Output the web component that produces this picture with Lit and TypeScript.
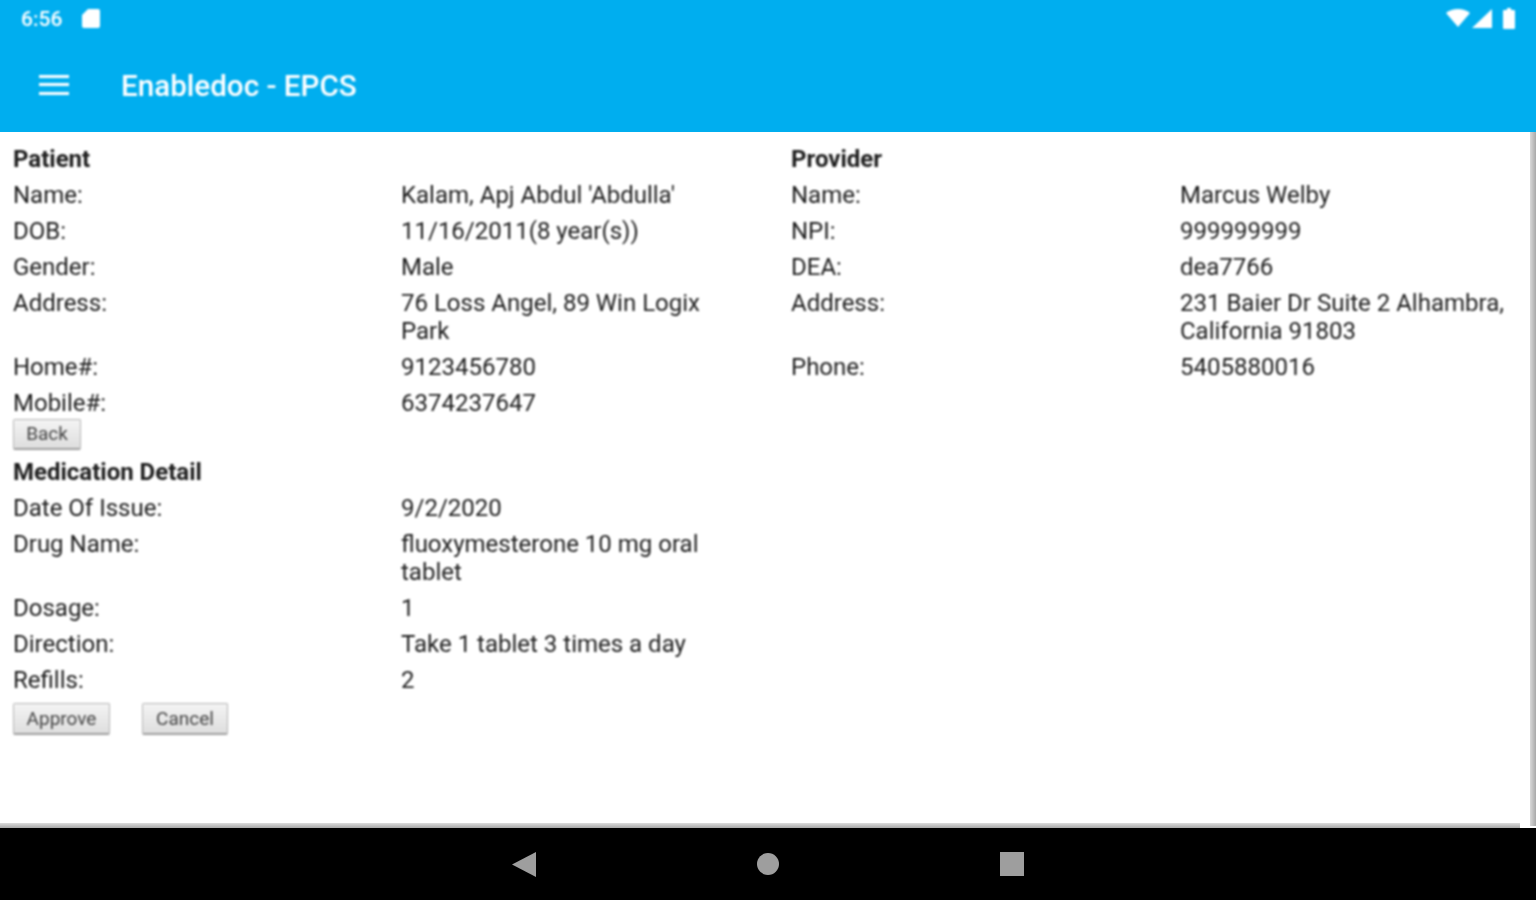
import { LitElement, html, css, svg } from "lit";
import { customElement } from "lit/decorators.js";

type Row = [string, string];

const patient: Row[] = [
  ["Name:", "Kalam, Apj Abdul 'Abdulla'"],
  ["DOB:", "11/16/2011(8 year(s))"],
  ["Gender:", "Male"],
  ["Address:", "76 Loss Angel, 89 Win Logix Park"],
  ["Home#:", "9123456780"],
  ["Mobile#:", "6374237647"],
];
const provider: Row[] = [
  ["Name:", "Marcus Welby"],
  ["NPI:", "999999999"],
  ["DEA:", "dea7766"],
  ["Address:", "231 Baier Dr Suite 2 Alhambra, California 91803"],
  ["Phone:", "5405880016"],
];
const medication: Row[] = [
  ["Date Of Issue:", "9/2/2020"],
  ["Drug Name:", "fluoxymesterone 10 mg oral tablet"],
  ["Dosage:", "1"],
  ["Direction:", "Take 1 tablet 3 times a day"],
  ["Refills:", "2"],
];

@customElement("app-root")
export class AppRoot extends LitElement {
  static styles = css`
    :host {
      display: block;
      width: 1536px;
      height: 900px;
      font-family: Roboto, "Liberation Sans", sans-serif;
      overflow: hidden;
    }
    .screen {
      position: relative;
      display: flex;
      flex-direction: column;
      height: 900px;
      background: #fff;
    }
    .top {
      height: 132px;
      flex: none;
      background: #00aeef;
      color: #fff;
      display: flex;
      flex-direction: column;
    }
    .status {
      height: 36px;
      display: flex;
      align-items: center;
      padding: 0 21px;
      filter: blur(0.9px);
    }
    .time {
      font-size: 21px;
      font-weight: 500;
      width: 61px;
      position: relative;
      top: 1px;
    }
    .sd { display: block; }
    .sys {
      margin-left: auto;
      display: flex;
      align-items: center;
    }
    .sys svg { display: block; }
    .wifi { margin-right: 2px; }
    .signal { margin-right: 11px; }
    .bar {
      flex: 1;
      display: flex;
      align-items: center;
      padding-left: 39px;
      padding-top: 1px;
      filter: blur(0.9px);
    }
    .menu {
      width: 30px;
      height: 20px;
      display: flex;
      flex-direction: column;
      justify-content: space-between;
      margin-right: 52px;
    }
    .menu span {
      display: block;
      height: 3px;
      background: #fff;
    }
    .title {
      font-size: 29.6px;
      font-weight: 500;
      white-space: nowrap;
      margin-top: 3px;
    }
    .content {
      flex: 1;
      padding: 9px 0 0 13px;
      color: #1d1d1d;
      font-size: 24px;
      line-height: 28px;
      filter: blur(0.9px);
    }
    .grid {
      display: grid;
      grid-template-columns: 388px 390px 389px 340px;
    }
    .col {
      display: grid;
      grid-template-columns: subgrid;
      grid-column: span 2;
      align-content: start;
    }
    .cell { padding: 4px 0; }
    .value { max-width: 340px; }
    .head {
      grid-column: span 2;
      padding: 4px 0;
      font-weight: 700;
      font-size: 24px;
    }
    .btn {
      display: inline-flex;
      align-items: center;
      justify-content: center;
      box-sizing: border-box;
      height: 31px;
      font-size: 19px;
      color: #444;
      background: linear-gradient(#f4f4f4, #dedede);
      border: 1px solid #b5b5b5;
      border-bottom: 2px solid #9f9f9f;
      border-radius: 2px;
    }
    .back-row { margin-top: -3px; height: 36px; }
    .back { width: 68px; }
    .actions {
      display: flex;
      gap: 32px;
      margin-top: 5px;
    }
    .approve { width: 97px; height: 32px; }
    .cancel { width: 86px; height: 32px; }
    .nav {
      height: 72px;
      flex: none;
      background: #000;
      display: flex;
      align-items: center;
      justify-content: center;
      gap: 220px;
      filter: blur(0.7px);
    }
    .nav svg { display: block; }
    .sb-v {
      position: absolute;
      right: 0;
      top: 132px;
      width: 6px;
      height: 694px;
      background: linear-gradient(90deg, #d8d8d8, #a8a8a8);
    }
    .sb-h {
      position: absolute;
      left: 0;
      top: 823px;
      width: 1520px;
      height: 5px;
      background: linear-gradient(#dcdcdc, #a8a8a8);
    }
  `;

  private rows(rows: Row[]) {
    return rows.map(
      ([k, v]) => html`<div class="cell">${k}</div><div class="cell value">${v}</div>`
    );
  }

  render() {
    return html`
      <div class="screen">
        <div class="top">
          <div class="status">
            <span class="time">6:56</span>
            <svg class="sd" width="18" height="19" viewBox="0 0 18 19">
              <path fill="#fff" d="M6 0h10a2 2 0 0 1 2 2v15a2 2 0 0 1-2 2H2a2 2 0 0 1-2-2V6z" />
            </svg>
            <div class="sys">
              ${svg`<svg class="wifi" width="24" height="18" viewBox="0 0 24 18">
                <path fill="#fff" d="M12 18 0 4Q5 0 12 0t12 4z" />
              </svg>`}
              <svg class="signal" width="20" height="19" viewBox="0 0 20 19">
                <path fill="#fff" d="M0 19 20 0v19z" />
              </svg>
              <svg width="12" height="21" viewBox="0 0 12 21">
                <path fill="#fff" d="M4 0h4v2h3a1 1 0 0 1 1 1v17a1 1 0 0 1-1 1H1a1 1 0 0 1-1-1V3a1 1 0 0 1 1-1h3z" />
              </svg>
            </div>
          </div>
          <div class="bar">
            <div class="menu"><span></span><span></span><span></span></div>
            <div class="title">Enabledoc - EPCS</div>
          </div>
        </div>

        <div class="content">
          <div class="grid">
            <div class="col">
              <div class="head">Patient</div>
              ${this.rows(patient)}
            </div>
            <div class="col">
              <div class="head">Provider</div>
              ${this.rows(provider)}
            </div>
          </div>
          <div class="back-row"><span class="btn back">Back</span></div>
          <div class="grid">
            <div class="col">
              <div class="head">Medication Detail</div>
              ${this.rows(medication)}
            </div>
          </div>
          <div class="actions">
            <span class="btn approve">Approve</span>
            <span class="btn cancel">Cancel</span>
          </div>
        </div>

        <div class="nav">
          <svg width="24" height="25" viewBox="0 0 24 25"><path fill="#9e9e9e" d="M24 0v25L0 12.5z" /></svg>
          <svg width="24" height="24" viewBox="0 0 24 24"><circle cx="12" cy="12" r="11" fill="#9e9e9e" /></svg>
          <svg width="24" height="24" viewBox="0 0 24 24"><rect width="24" height="24" fill="#9e9e9e" /></svg>
        </div>

        <div class="sb-v"></div>
        <div class="sb-h"></div>
      </div>
    `;
  }
}
